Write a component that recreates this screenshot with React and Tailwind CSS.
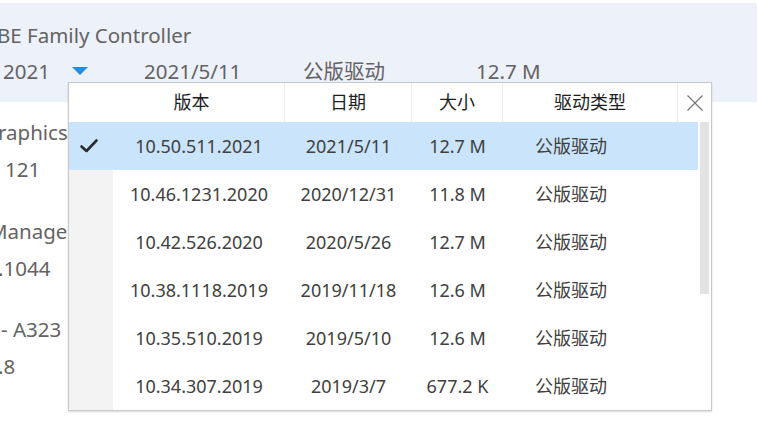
import React from 'react';

const versions = [
  { ver: '10.50.511.2021', date: '2021/5/11', size: '12.7 M', type: '公版驱动', active: true },
  { ver: '10.46.1231.2020', date: '2020/12/31', size: '11.8 M', type: '公版驱动' },
  { ver: '10.42.526.2020', date: '2020/5/26', size: '12.7 M', type: '公版驱动' },
  { ver: '10.38.1118.2019', date: '2019/11/18', size: '12.6 M', type: '公版驱动' },
  { ver: '10.35.510.2019', date: '2019/5/10', size: '12.6 M', type: '公版驱动' },
  { ver: '10.34.307.2019', date: '2019/3/7', size: '677.2 K', type: '公版驱动' },
];

const font = { fontFamily: '"Noto Sans", "Noto Sans CJK SC", sans-serif' };

const Check = () => (
  <svg width="20" height="16" viewBox="0 0 20 16" fill="none">
    <path d="M2.5 8.5 L7.5 13 L17.5 2.5" stroke="#2b2b2b" strokeWidth="2.6" strokeLinecap="round" strokeLinejoin="round" />
  </svg>
);

const Close = () => (
  <svg width="18" height="18" viewBox="0 0 18 18">
    <path d="M1.5 1.5 L16.5 16.5 M16.5 1.5 L1.5 16.5" stroke="#7a7a7a" strokeWidth="1.3" />
  </svg>
);

const App = () => {
  return (
    <div className="relative w-[759px] h-[432px] overflow-hidden bg-white text-[#636363]" style={font}>
      <div className="pt-[3px]">
        <div className="w-[757px] h-[99px] bg-[#edf1fa] text-[20.5px]">
          <div className="h-[48px] pt-[16px] leading-[32px] ml-[-3px] whitespace-nowrap">BE Family Controller</div>
          <div className="flex items-center h-[40px] whitespace-nowrap">
            <span className="ml-[3px] w-[69px]">2021</span>
            <svg width="16" height="8" viewBox="0 0 16 8">
              <path d="M0 0 H16 L8 8 Z" fill="#1f8fe6" />
            </svg>
            <span className="ml-[56px] w-[159px]">2021/5/11</span>
            <span className="w-[173px]">公版驱动</span>
            <span>12.7 M</span>
          </div>
        </div>
        <div className="text-[20.5px] leading-[37px] pt-[12px] whitespace-nowrap">
          <div className="ml-[-2px]">raphics</div>
          <div className="ml-[5px]">121</div>
          <div className="ml-[-11px] mt-[25px]">Manage</div>
          <div className="ml-[-2px]">.1044</div>
          <div className="ml-[1px] mt-[24px]">- A323</div>
          <div className="ml-[-2px]">.8</div>
        </div>
      </div>

      <div className="absolute left-[68px] top-[82px] w-[644px] border border-[#c9c9c9] bg-white shadow-[0_1px_2px_rgba(0,0,0,0.15)]">
        <div className="flex h-[39px] items-center text-[18px] text-[#1e1e1e]">
          <div className="w-[216px] pl-[30px] text-center border-r border-[#ececec] h-full flex items-center justify-center">版本</div>
          <div className="w-[127px] text-center border-r border-[#ececec] h-full flex items-center justify-center">日期</div>
          <div className="w-[91px] text-center border-r border-[#ececec] h-full flex items-center justify-center">大小</div>
          <div className="w-[175px] text-center border-r border-[#ececec] h-full flex items-center justify-center">驱动类型</div>
          <div className="flex-1 flex items-center justify-center h-full">
            <Close />
          </div>
        </div>
        <div className="flex">
          <div className="flex-1">
            {versions.map((v) => (
              <div
                key={v.ver}
                className={`flex h-[48px] items-center text-[18px] text-[#404040] ${v.active ? 'bg-[#c9e4fb]' : ''}`}
              >
                <div className={`w-[44px] h-full flex items-center justify-center pr-[4px] ${v.active ? '' : 'bg-[#f3f3f3]'}`}>
                  {v.active && <Check />}
                </div>
                <div className="w-[172px] text-center">{v.ver}</div>
                <div className="w-[127px] text-center">{v.date}</div>
                <div className="w-[91px] text-center">{v.size}</div>
                <div className="flex-1 pl-[32px]">{v.type}</div>
              </div>
            ))}
          </div>
          <div className="w-[13px] pl-[2px] pr-[2px]">
            <div className="h-[172px] bg-[#e3e3e3]" />
          </div>
        </div>
      </div>
    </div>
  );
};

export default App;
